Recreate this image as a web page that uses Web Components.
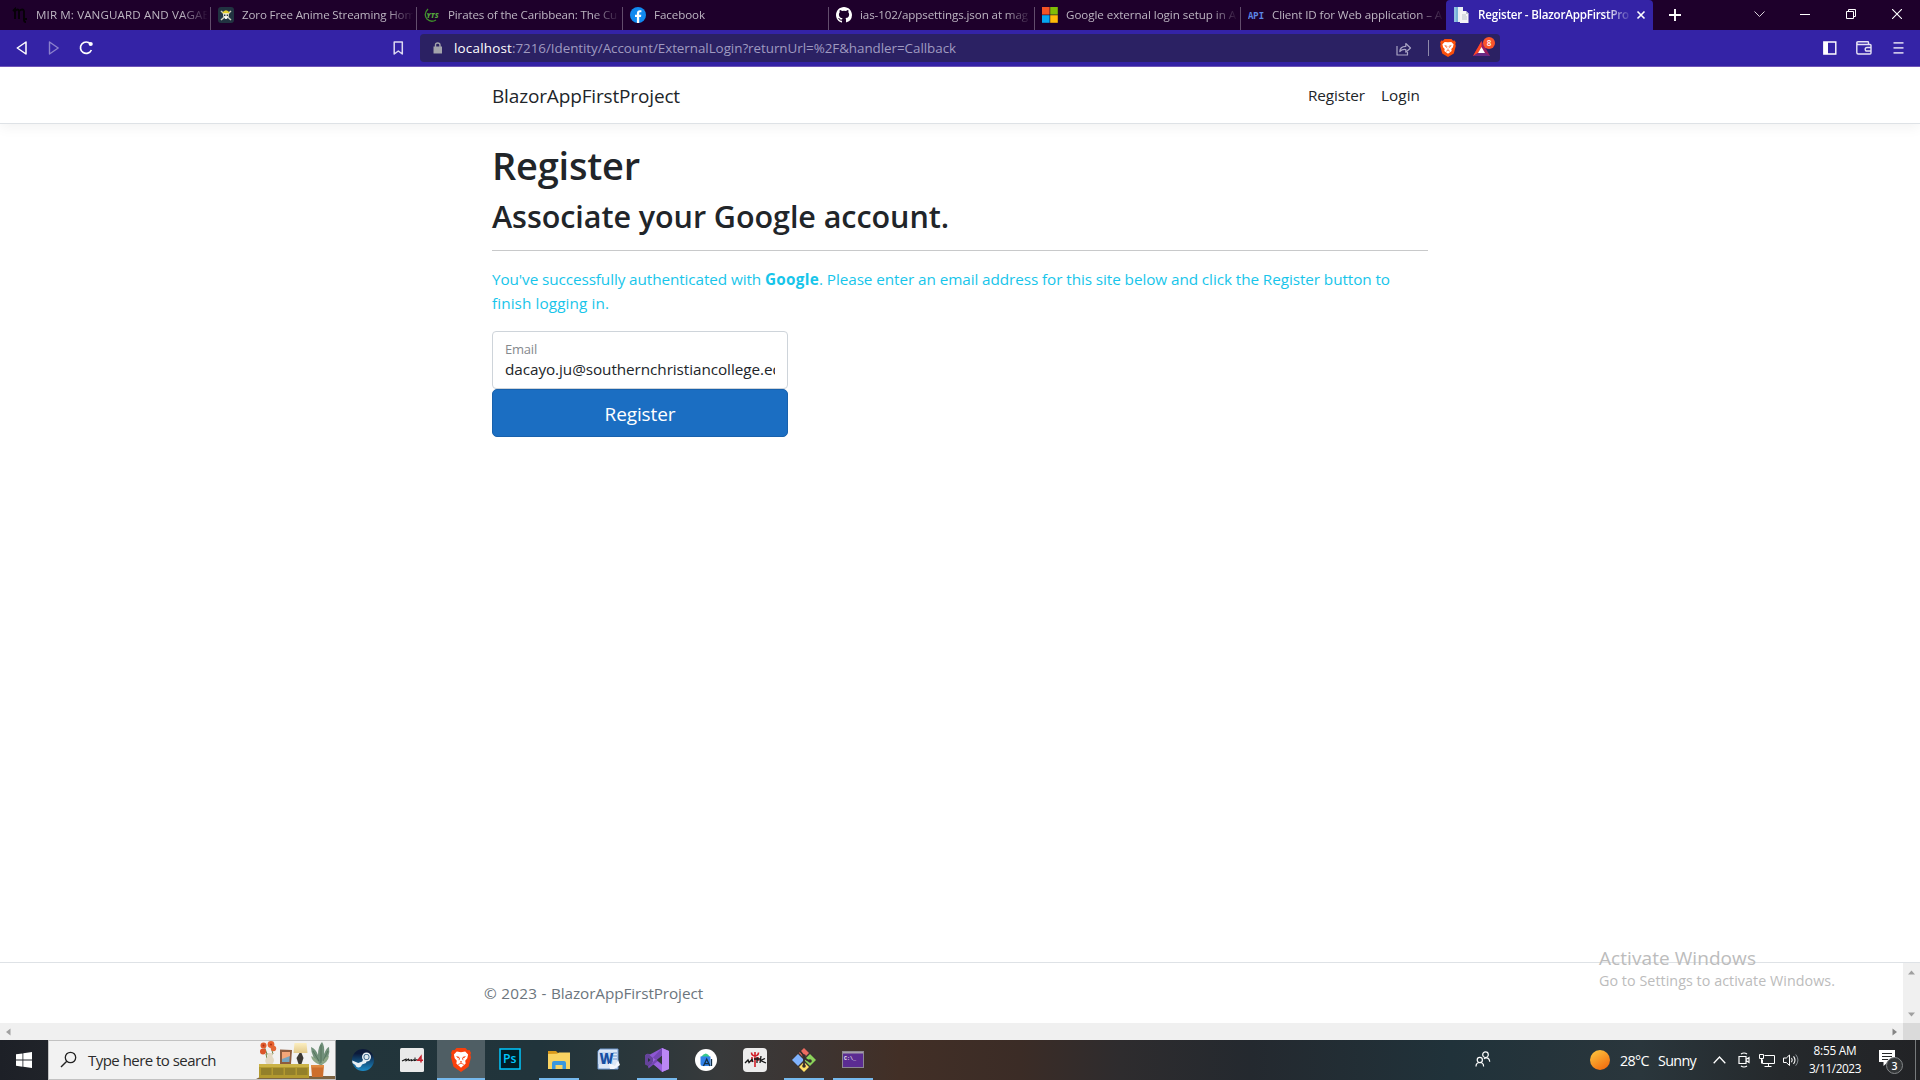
<!DOCTYPE html>
<html lang="en">
<head>
<meta charset="utf-8">
<title>Register - BlazorAppFirstProject</title>
<style>
html,body{margin:0;height:1080px;overflow:hidden;background:#fff}
body{font-family:"Open Sans","Noto Sans",sans-serif}
</style>
</head>
<body>
<desktop-screen></desktop-screen>
<script>
const define=(tag,html)=>customElements.define(tag,class extends HTMLElement{
  constructor(){super();this.attachShadow({mode:"open"}).innerHTML=html}
});

const ICONS={
mir:[16,16,`<path d="M1 4l2-2v10M3 4q3-3 4 0v8M7 4q4-3 5 0v9q0 2 2 2M11 12h4" fill="none" stroke="#060206" stroke-width="1.8"/>`],
zoro:[16,16,`<rect width="16" height="16" rx="3" fill="#213341"/><path d="M3 4l10 9M13 4L3 13" stroke="#cfd0c2" stroke-width="1.500"/><circle cx="8" cy="8" r="2.900" fill="#f1efe2"/><path d="M4 6.200q4-6 8 0z" fill="#e5cf2c"/><path d="M6 8.200h1.400M8.700 8.200h1.400" stroke="#213341" stroke-width="1.400"/><path d="M6.800 11h2.400" stroke="#fff" stroke-width="1.800"/>`],
yts:[16,16,`<path d="M4 2Q-1 7 3 12q4 4 9 1" fill="none" stroke="#3f8f2b" stroke-width="1.300"/><text x="2.500" y="10.500" font-size="7" font-weight="800" font-style="italic" fill="#54a43b" textLength="12" font-family="Open Sans">YTS</text>`],
fb:[16,16,`<circle cx="8" cy="8" r="8" fill="#1189ef"/><path d="M6.900 16V10H5V7.700h1.900V6.200c0-2 1.200-3 3-3l1.500.1v2h-1c-1 0-1.200.5-1.200 1.200v1.200h2.100L11 10H9.200v6z" fill="#fff"/>`],
gh:[16,16,`<path fill="#fff" d="M8 0C3.580 0 0 3.580 0 8c0 3.540 2.290 6.530 5.470 7.590.4.070.55-.17.55-.38v-1.500c-2 .37-2.530-.9-2.700-1.200-.1-.2-.5-.900-.820-1.080-.280-.15-.68-.520 0-.53.630-.01 1.080.580 1.230.820.720 1.210 1.870.870 2.330.660.070-.520.280-.870.510-1.070-1.780-.2-3.640-.89-3.640-3.950 0-.87.310-1.590.820-2.150-.080-.2-.360-1.020.080-2.120 0 0 .67-.21 2.200.820a7.600 7.600 0 014 0c1.530-1.040 2.200-.820 2.200-.820.440 1.100.160 1.920.080 2.120.510.560.820 1.270.820 2.150 0 3.070-1.870 3.750-3.650 3.950.290.250.540.730.540 1.480v2.200c0 .21.150.46.550.380A8 8 0 0016 8c0-4.420-3.580-8-8-8z"/>`],
ms:[16,16,`<path fill="#f35325" d="M0 0h7.600v7.600H0z"/><path fill="#81bc06" d="M8.200 0h7.600v7.600H8.200z"/><path fill="#05a6f0" d="M0 8.200h7.600v7.600H0z"/><path fill="#ffba08" d="M8.200 8.200h7.600v7.600H8.200z"/>`],
api:[16,16,`<text x="0" y="12" font-size="10.500" font-weight="700" fill="#5b86e5" textLength="16" lengthAdjust="spacingAndGlyphs" font-family="Liberation Mono">API</text>`],
doc:[16,16,`<path d="M1 0h9v15H1z" fill="#e8eef3"/><path d="M1 0h4v15H1z" fill="#76b1d6"/><path d="M1.500 0h1v15h-1z" fill="#a7d1ea"/><path d="M7 4h6l2.500 2.500V16H7z" fill="#f4f5f6"/><path d="M9 8h4M9 10h5M9 12h5" stroke="#bcc5cb"/><path d="M13 4v3h2.500" fill="#b9c2c8"/>`],
close:[10,10,`<path d="M1.500 1.500l7 7m0-7l-7 7" stroke="#fff" stroke-width="1.600"/>`],
plus:[12,12,`<path d="M6 0v12M0 6h12" stroke="#fff" stroke-width="1.900"/>`],
chev:[11,8,`<path d="M.5 1.500l5 5 5-5" fill="none" stroke="#d8d2db"/>`],
min:[10,10,`<path d="M0 4.500h10" stroke="#fff"/>`],
restore:[10,10,`<path d="M.5 2.500h7v7h-7zM2.500 2.500v-2h7v7h-2" fill="none" stroke="#fff"/>`],
wclose:[10,10,`<path d="M0 0l10 10m0-10L0 10" stroke="#fff" stroke-width="1.100"/>`],
back:[12,14,`<path d="M10 1v12L1.300 7z" fill="none" stroke="#fff" stroke-width="1.500" stroke-linejoin="round"/>`],
fwd:[12,14,`<path d="M1.500 1v12L10.200 7z" fill="none" stroke="#8b80cd" stroke-width="1.400" stroke-linejoin="round"/>`],
reload:[15,14,`<path d="M11.500 3A5.700 5.700 0 1012.400 9" fill="none" stroke="#fff" stroke-width="1.700"/><circle cx="11.700" cy="3" r="2.100" fill="#fff"/>`],
mark:[11,14,`<path d="M1.200 1h8.100v12L5.300 10l-4.100 3z" fill="none" stroke="#ddd9f1" stroke-width="1.500" stroke-linejoin="round"/>`],
lock:[10,12,`<path d="M.5 4.500h8.500v7H.5z" fill="#a3a3ab"/><path d="M2.500 5V3q0-2 2.200-2T7 3v2" fill="none" stroke="#a3a3ab" stroke-width="1.400"/>`],
share:[16,15,`<path d="M1 5v9h10.500v-3M3.800 10.500q.2-5 6-5.200V2.500L14.500 7l-4.700 4.200V8.500q-4-.3-6 2z" fill="none" stroke="#a9a4c4" stroke-width="1.200" stroke-linejoin="round"/>`],
lion:[16,18,`<path d="M4.500 0h7l1.500 1.700 1.700-.1 1.100 2-.5 1.400.5 2-2 7.500L8 18l-5.800-3.500L.2 7l.5-2-.5-1.400 1.100-2 1.700.1z" fill="#fb4f0b"/><path d="M8 3.300l3.300-.4 2.300 2.300-.7 3-1.600 1.700.4 2.100L8 14.800l-3.700-2.800.4-2.100-1.600-1.700-.7-3 2.300-2.300z" fill="#fff"/><path d="M4.200 6.200l2.700.6-1 1.200zM11.800 6.200l-2.700.6 1 1.200zM7.300 9.700h1.400L8 10.900z" fill="#fb4f0b"/><path d="M8 10.700v.8M6 12.300l2-.9 2 .9M7 7.200L6.500 9M9 7.200L9.500 9" stroke="#fb4f0b" stroke-width=".6" fill="none"/>`],
bat:[19,17,`<path d="M8.500 1L0 16h17z" fill="#9b1f5f"/><path d="M8.500 1L0 16l5-3 3.500-6z" fill="#ff4724"/><path d="M0 16h17l-5-3H5z" fill="#672a86"/><path d="M8.500 7L5 13h7z" fill="#fff"/>`],
side:[14,14,`<path d="M.8 1h12v12H.8z" fill="none" stroke="#fff" stroke-width="1.400"/><path d="M1 1h4v12H1z" fill="#fff"/>`],
wallet:[16,14,`<path d="M12.500 3.500V1.500q0-.7-.8-.7H2Q.8.8.8 2v9.500q0 1.500 1.400 1.500H14q1 0 1-1V4.500q0-1-1-1H2.500Q.8 3.500.8 2" fill="none" stroke="#e6e3f5" stroke-width="1.400"/><path d="M15 6.500h-4q-1.800 0-1.800 1.800T11 10h4" fill="none" stroke="#e6e3f5" stroke-width="1.400"/>`],
menu:[11,14,`<path d="M.5 1.800h10M.5 6.800h10M.5 11.800h10" stroke="#c8c2e8" stroke-width="1.800"/>`],
win:[16,16,`<path fill="#fff" d="M0 2.300L6.500 1.400v6.200H0zM7.300 1.300L16 0v7.600H7.300zM0 8.400h6.500v6.300L0 13.700zM7.300 8.400H16V16l-8.700-1.200z"/>`],
search:[18,18,`<circle cx="10.500" cy="6.500" r="5.200" fill="none" stroke="#222" stroke-width="1.300"/><path d="M6.800 10.200L1 16" stroke="#222" stroke-width="1.400"/>`],
room:[79,38,`<defs><linearGradient id="g" x2="0" y2="1"><stop stop-color="#fbeec0" offset="0"/><stop stop-color="#e2c98a" offset="1"/></linearGradient></defs><path d="M0 38l6-3h73v3z" fill="#7d6442"/><rect x="3" y="23" width="50" height="14" fill="#b39a2e"/><path d="M3 23h50v3H3z" fill="#cbb347"/><path d="M5 27h10.500v7H5zM17 27h10.500v7H17zM29 27h10.500v7H29zM41 27h10.500v7H41z" fill="#93802a"/><path d="M12 22l-2-9h7l-2-7M11 13L8 5" stroke="#718245" fill="none"/><path d="M11.500 12h5v4q3 3 0 7h-6q-3-4 1-7z" fill="#e3d9c4"/><circle cx="7.500" cy="4.500" r="3" fill="#e05b2c"/><circle cx="15" cy="3.500" r="3.400" fill="#e8632f"/><circle cx="7" cy="10.500" r="3" fill="#dc552a"/><circle cx="17.500" cy="7.500" r="2.700" fill="#e46634"/><circle cx="7.500" cy="4.500" r="1" fill="#a93219"/><circle cx="15" cy="3.500" r="1" fill="#a93219"/><path d="M24 8.500l12 .5-1 14H24z" fill="#8d5c3e"/><path d="M26 11h8l-.6 10H26z" fill="#77a5c0"/><path d="M26 11h8v4l-8 3z" fill="#f2a779"/><path d="M38.500 2h12l1 10H37.500z" fill="url(#g)"/><path d="M43.500 12h2l2 5-2 6h-3l-2-6z" fill="#3b3833"/><path d="M64 24q-9-8-9-18 5 2 7 8 0-9 4-13 3 4 2 12 3-7 5-7 2 10-7 18z" fill="#71907a"/><path d="M64 24q-8-3-9-9 6 2 9 9 2-7 9-9-1 7-9 9z" fill="#8da787"/><path d="M65 22V4M63 20l-6-10M67 20l5-10" stroke="#4b6c52" stroke-width=".7"/><path d="M55 24h13l-1 12H56z" fill="#cd6f2d"/><path d="M55 24h13v2.500H55z" fill="#df8b43"/>`],
steam:[22,22,`<defs><linearGradient id="s" x2="0" y2="1"><stop stop-color="#0c1a3a" offset=".2"/><stop stop-color="#1c8cc8" offset="1"/></linearGradient></defs><circle cx="11" cy="11" r="11" fill="url(#s)"/><path d="M.2 11.500l6 2.500 4-1.500L12 8.500l3 2.500-1 3-4 1.500q-1 3.200-4 3-2-.5-2.700-2.600L.5 14z" fill="#e9f0f5"/><circle cx="14.500" cy="8" r="4.500" fill="#e9f0f5"/><circle cx="14.500" cy="8" r="3" fill="#2d5c85"/><circle cx="14.500" cy="8" r="2.200" fill="#dfe9f0"/>`],
muk:[24,24,`<rect width="24" height="24" rx="1.500" fill="#eaeaea"/><path d="M2 13l4-1.800v1.600l2.500-1.600.5 1.300 2.500-.8v1l2.500-1 .5.900 3-1" fill="none" stroke="#161616" stroke-width="1.100"/><path d="M15 9.500v3.500" stroke="#161616"/><path d="M21 14.500V8.500L18 12.300h5" fill="none" stroke="#c8202d" stroke-width="1.500"/>`],
brave:[20,24,`<path d="M5.500 0h9L16.500 2.200l2-.1L20 5l-.6 1.700.6 2.800-2.500 9.200L10 24l-7.500-5.300L0 9.500l.6-2.800L0 5l1.500-2.900 2 .1z" fill="#f9400c"/><path d="M10 4.300l4.200-.8 2.900 3-.8 3.800-2.100 2.500.5 2.800L10 19.800l-4.700-4.200.5-2.800-2.100-2.500-.8-3.800 2.900-3z" fill="#fff"/><path d="M5 8l3.500.9-1.300 1.500zM15 8l-3.500.9 1.300 1.500zM9 13h2l-1 1.500z" fill="#f9400c"/><path d="M10 14v1.200M7.200 16.500l2.800-1.300 2.800 1.300M8.700 9.700L8 12.200M11.300 9.700L12 12.200" stroke="#f9400c" stroke-width=".8" fill="none"/>`],
ps:[22,22,`<rect x="1" y="1" width="20" height="20" fill="#001d26" stroke="#00c8ff" stroke-width="1.500"/><text x="4" y="15" font-size="12" font-weight="600" fill="#00c8ff" textLength="13.500" lengthAdjust="spacingAndGlyphs" font-family="Open Sans">Ps</text>`],
folder:[22,18,`<path d="M0 0h8l2 2h12v16H0z" fill="#d99a1c"/><path d="M0 3l9-.2 2-1.300h11V18H0z" fill="#f9d362"/><path d="M4 18v-6q0-2 2-2h10q2 0 2 2v6h-3.500v-4h-7v4z" fill="#3b97de"/>`],
word:[23,22,`<path d="M3 1h18v20H1V3z" fill="#dce8f7" stroke="#6d96cf"/><path d="M14 5h6M14 8h6M14 11h6" stroke="#6c93cc"/><path d="M1 4h15v12H1z" fill="#c5d9f3"/><text x="2.500" y="16" font-size="16" font-weight="800" fill="#174fa3" textLength="14" lengthAdjust="spacingAndGlyphs" font-family="Open Sans">W</text><path d="M12 15l6 3 3-6 2 5-6 4h-4z" fill="#f5f8fd"/>`],
vs:[24,24,`<path d="M17 0l7 3v18l-7 3L3.500 10.500 1 8.500 0 9l2-3 3 .5z" fill="#8d57d3"/><path d="M0 7.500L2.500 6 5 7l13 11v6L4 13l-2 1.500V10z" fill="#9a62dd"/><path d="M0 7l3-1.500L8 10v4l-5 4L0 16.500z" fill="#65439b"/><path d="M3 10l2.500 2L3 14z" fill="#26343a"/><path d="M17 0l7 3v18l-7 3z" fill="#bb87f5"/><path d="M17 0L8 9.500l3 2.500 6-5zM3 18l5-4 3-3 2 2-9.500 7.500z" fill="#7547b5"/><path d="M17 7.500v9L11.500 12z" fill="#30363a"/>`],
studio:[22,22,`<circle cx="11" cy="11" r="11" fill="#fff"/><path d="M6 8q5-7 9 0v2H6z" fill="#35c98a"/><path d="M5.500 7.500h10v9.500H7.500q-2 0-2-2z" fill="#3181e8"/><path d="M8.500 17l3.200-7 3.200 7M10 14.700h4M16.500 10v7" stroke="#123047" fill="none" stroke-width="1.300"/>`],
mtk:[24,24,`<rect width="24" height="24" rx="4" fill="#ececec"/><path d="M8.500 4.500q0 3 3.500 3.500M12 4v15M15.500 4.500q0 3-3.500 3.500M9 9v5M15 9v4" stroke="#d21e29" fill="none" stroke-width="1.600"/><path d="M2 15l3-3 1 2.500 3-3 1 2.500M11 11h6M14 9v6M18 8l-1 7M22 10.500l-4.500 2 5.500 2.500" stroke="#161616" fill="none" stroke-width="1.300"/>`],
git:[24,24,`<path d="M12 0l5 5-5 5-5-5z" fill="#ee6c60"/><path d="M6 6l6 6-6 6-6-6z" fill="#80b3ff"/><path d="M18 6l6 6-6 6-6-6z" fill="#8cd45b"/><path d="M12 14l5 5-5 5-5-5z" fill="#ffe067"/><path d="M8 3l4 5v10M12 8q1 4 6 5" fill="none" stroke="#352e2d" stroke-width="1.800"/><circle cx="12" cy="8" r="1.800" fill="#352e2d"/><circle cx="12" cy="18" r="1.800" fill="#352e2d"/><circle cx="18" cy="13" r="1.800" fill="#352e2d"/>`],
cmd:[22,17,`<rect x=".5" y=".5" width="21" height="16" fill="#5b2c92" stroke="#8c8793"/><path d="M1 1h20v1.500H1z" fill="#a49faa"/><text x="2" y="8.500" font-size="5" font-weight="700" fill="#eee" font-family="Liberation Mono">C:\\_</text>`],
people:[16,16,`<g fill="none" stroke="#fff" stroke-width="1.200"><circle cx="10.500" cy="3.700" r="2.800"/><circle cx="4.800" cy="9" r="2.600"/><path d="M1 15.500q0-4 3.800-4t3.800 4M9 8q1-1.300 2.500-1.200 3 .2 3.200 4"/></g>`],
sun:[20,20,`<defs><linearGradient id="u" x1=".2" x2=".8" y2="1"><stop stop-color="#fdc33d" offset="0"/><stop stop-color="#f2690d" offset="1"/></linearGradient></defs><circle cx="10" cy="10" r="10" fill="url(#u)"/>`],
up:[13,8,`<path d="M.7 7.200L6.500 1l5.800 6.200" fill="none" stroke="#fff" stroke-width="1.300"/>`],
cam:[13,16,`<path d="M1 4.500h7v7H1zM8 7.500l3-2v5l-3-2M3 2q3-2 6 0M3 14q3 2 6 0" fill="none" stroke="#fff" stroke-width="1.200"/>`],
net:[17,15,`<path d="M5.500 2.500h10v8H3.500v-4M9.500 10.500v3M5.500 13.500h7" fill="none" stroke="#fff"/><path d="M.5 1.500h4v4h-4zM2.500 5.500v5" fill="none" stroke="#fff"/>`],
vol:[17,14,`<path d="M.5 5h2.800L6.500 2v10.500l-3.200-3H.5z" fill="none" stroke="#fff"/><path d="M8.500 5q1.500 2 0 4.300M10.500 3.300q3 3.700 0 7.600" fill="none" stroke="#fff" stroke-width="1.100"/><path d="M12.700 1.500q4.500 5.500 0 11.200" fill="none" stroke="#899095"/>`],
note:[17,16,`<path d="M0 0h16v12H9l-4.500 4v-4H0z" fill="#fff"/><path d="M3 3.500h10M3 6.500h10M3 9.500h6" stroke="#262829"/>`],
tup:[7,5,`<path d="M0 4.500L3.500.5 7 4.500z" fill="#a0a0a0"/>`],
tdown:[7,5,`<path d="M0 .5h7L3.500 4.500z" fill="#a0a0a0"/>`],
tleft:[5,8,`<path d="M4.500.5v7L0 4z" fill="#a0a0a0"/>`],
tright:[5,8,`<path d="M.5.5v7L5 4z" fill="#858585"/>`]
};
customElements.define("ui-icon",class extends HTMLElement{
  constructor(){super();this.attachShadow({mode:"open"})}
  connectedCallback(){
    const [w,h,body]=ICONS[this.getAttribute("name")];
    this.shadowRoot.innerHTML=`<style>:host{display:block;flex:none;width:${w}px;height:${h}px}svg{display:block}</style><svg width="${w}" height="${h}" viewBox="0 0 ${w} ${h}">${body}</svg>`;
  }
});

define("browser-tab",`<style>
:host{display:flex;box-sizing:border-box;flex:none;width:206px;height:30px;align-items:center;padding-left:8px;color:#bdb5c2}
.cut{width:171px;margin-left:8px;margin-bottom:2px;overflow:hidden;-webkit-mask-image:linear-gradient(90deg,#000 145px,transparent 172px)}
.sep{width:1px;height:23px;align-self:flex-end;margin-left:auto;margin-right:-1px;background:#624d6c}
:host([active]){width:207px;background:#3423a6;border-radius:4px 4px 0 0;color:#fff}
:host([active]) .cut{width:152px;-webkit-mask-image:linear-gradient(90deg,#000 128px,transparent 154px)}
:host([active]) .sep,:host([last]) .sep{visibility:hidden}
::slotted([slot=close]){margin-left:6px}
</style><slot name="icon"></slot><div class="cut"><slot></slot></div><slot name="close"></slot><div class="sep"></div>`);

define("tab-strip",`<style>
:host{display:flex;height:30px;background:#1e002b;align-items:center;padding-left:4px}
ui-icon{margin-bottom:1px}
</style>
<browser-tab><ui-icon slot="icon" name="mir"></ui-icon><fit-text s="11.6" w="174">MIR M: VANGUARD AND VAGAB</fit-text></browser-tab>
<browser-tab><ui-icon slot="icon" name="zoro"></ui-icon><fit-text s="11.6" w="173">Zoro Free Anime Streaming Hom</fit-text></browser-tab>
<browser-tab><ui-icon slot="icon" name="yts"></ui-icon><fit-text s="11.6" w="169">Pirates of the Caribbean: The Cu</fit-text></browser-tab>
<browser-tab><ui-icon slot="icon" name="fb"></ui-icon><fit-text s="11.6" w="51">Facebook</fit-text></browser-tab>
<browser-tab><ui-icon slot="icon" name="gh"></ui-icon><fit-text s="11.6" w="168">ias-102/appsettings.json at mag</fit-text></browser-tab>
<browser-tab><ui-icon slot="icon" name="ms"></ui-icon><fit-text s="11.6" w="170">Google external login setup in A</fit-text></browser-tab>
<browser-tab last><ui-icon slot="icon" name="api"></ui-icon><fit-text s="11.6" w="170">Client ID for Web application – A</fit-text></browser-tab>
<browser-tab active><ui-icon slot="icon" name="doc" style="margin-left:-1px;margin-right:1px"></ui-icon><fit-text s="11.6" w="151" weight="600">Register - BlazorAppFirstPro</fit-text><ui-icon slot="close" name="close"></ui-icon></browser-tab>
<ui-icon name="plus" style="margin-left:16px"></ui-icon>
<ui-icon name="chev" style="margin-left:73px;margin-bottom:3px"></ui-icon>
<ui-icon name="min" style="margin-left:35px"></ui-icon>
<ui-icon name="restore" style="margin-left:36px;margin-bottom:2px"></ui-icon>
<ui-icon name="wclose" style="margin-left:36px;margin-bottom:2px"></ui-icon>`);

define("address-bar",`<style>
:host{display:flex;box-sizing:border-box;width:1080px;height:28px;background:#2b2163;border-radius:4px;align-items:center;padding-left:13px;color:#9f9ac0}
.host{color:#fff}
.share{margin-left:auto}.line{width:1px;height:16px;background:#8f8aab;margin:0 11px 0 16px}
.bat{position:relative;margin:0 8px 0 17px}
.badge{position:absolute;left:10px;top:-3px;width:12px;height:12px;border-radius:6px;background:#fb542b;color:#fff;display:flex;justify-content:center;align-items:center}
</style><ui-icon name="lock"></ui-icon>
<fit-text class="host" s="13.4" w="58" style="margin-left:11px">localhost</fit-text><fit-text s="13.4" w="444">:7216/Identity/Account/ExternalLogin?returnUrl=%2F&amp;handler=Callback</fit-text>
<ui-icon class="share" name="share"></ui-icon><div class="line"></div><ui-icon name="lion"></ui-icon>
<div class="bat"><ui-icon name="bat"></ui-icon><div class="badge"><fit-text s="8" w="4.500" weight="600">8</fit-text></div></div>`);

define("browser-toolbar",`<style>
:host{display:flex;box-sizing:border-box;height:37px;background:#3423a6;border-bottom:1px solid #7055ba;align-items:center;padding-left:16px}
</style><ui-icon name="back"></ui-icon><ui-icon name="fwd" style="margin-left:20px"></ui-icon><ui-icon name="reload" style="margin-left:19px"></ui-icon>
<ui-icon name="mark" style="margin-left:299px"></ui-icon><address-bar style="margin-left:16px"></address-bar>
<ui-icon name="side" style="margin-left:323px"></ui-icon><ui-icon name="wallet" style="margin-left:19px"></ui-icon><ui-icon name="menu" style="margin-left:21px"></ui-icon>`);

define("site-nav",`<style>
:host{display:flex;height:56px;border-bottom:1px solid #dee2e6;box-shadow:0 4px 12px rgba(0,0,0,.05);color:#212529}
.in{display:flex;width:936px;margin:0 auto;padding-right:8px;align-items:center;box-sizing:border-box}
.links{display:flex;margin-left:auto;gap:16px}
</style><div class="in"><fit-text s="19" w="188" style="margin-top:1px">BlazorAppFirstProject</fit-text>
<div class="links"><fit-text s="15.300" w="57">Register</fit-text><fit-text s="15.300" w="39">Login</fit-text></div></div>`);

define("email-field",`<style>
:host{display:flex;flex-direction:column;box-sizing:border-box;width:296px;height:58px;border:1px solid #ced4da;border-radius:4px;padding:7px 12px 0;color:#212529}
.label{color:#85898d;height:20px;display:flex;align-items:center}.value{height:20px;overflow:hidden;display:flex;align-items:center}
</style><div class="label"><slot name="label"></slot></div><div class="value"><slot></slot></div>`);

define("primary-button",`<style>
:host{display:flex;box-sizing:border-box;width:296px;height:48px;border:1px solid #1861ac;border-radius:5px;background:#1b6ec2;color:#fff;align-items:center;justify-content:center;padding-top:1px}
</style><slot></slot>`);

define("register-page",`<style>
:host{display:flex;flex-direction:column;box-sizing:border-box;width:936px;margin:0 auto;color:#212529;flex:1;padding-top:17px}
h1,h2,p{margin:0;font-weight:inherit;display:flex;align-items:center}
h1{height:48px}h2{height:38px;margin-top:8px}
hr{width:100%;height:1px;border:0;margin:15px 0 16px;background:#c8c9ca}
p{height:24px;color:#17c5ea}
p.last{margin-bottom:16px}
</style><h1><fit-text s="38" w="148" weight="600">Register</fit-text></h1>
<h2><fit-text s="30.500" w="457" weight="600">Associate your Google account.</fit-text></h2><hr>
<p><fit-text s="15.300" w="273">You've successfully authenticated with&nbsp;</fit-text><fit-text s="15.300" w="54" weight="700">Google</fit-text><fit-text s="15.300" w="571">. Please enter an email address for this site below and click the Register button to</fit-text></p>
<p class="last"><fit-text s="15.300" w="117">finish logging in.</fit-text></p>
<email-field><fit-text slot="label" s="13" w="32">Email</fit-text><fit-text s="15.300" w="286">dacayo.ju@southernchristiancollege.edu</fit-text></email-field>
<primary-button><fit-text s="19" w="71">Register</fit-text></primary-button>`);

define("site-footer",`<style>
:host{display:flex;flex-direction:column;height:77px;border-top:1px solid #dee2e6}
.row{display:flex;height:60px}.text{flex:1;display:flex;align-items:center;padding-left:484px;padding-bottom:1px;box-sizing:border-box;height:60px;color:#6c757d}
.v{width:17px;background:#f0f0f0;display:flex;flex-direction:column;justify-content:space-between;align-items:center;padding:7px 0 6px;box-sizing:border-box}
.h{height:17px;background:#f0f0f0;display:flex;align-items:center;padding-left:6px}
.h .r{margin-left:auto;margin-right:6px}.corner{width:17px;height:17px;background:#dadada}
</style><div class="row"><div class="text"><fit-text s="15.300" w="67">© 2023 -&nbsp;</fit-text><fit-text s="15.300" w="152">BlazorAppFirstProject</fit-text></div>
<div class="v"><ui-icon name="tup"></ui-icon><ui-icon name="tdown"></ui-icon></div></div>
<div class="h"><ui-icon name="tleft"></ui-icon><ui-icon class="r" name="tright"></ui-icon><div class="corner"></div></div>`);

define("task-app",`<style>
:host{display:flex;position:relative;flex:none;width:48px;height:40px;align-items:center;justify-content:center}
:host([active]){background:#4f5e64}
.line{position:absolute;bottom:0;left:4px;right:4px;height:2px;background:#76b9ed;display:none}
:host([open]) .line,:host([active]) .line{display:block}:host([active]) .line{left:0;right:0}
</style><slot></slot><div class="line"></div>`);

define("system-tray",`<style>
:host{display:flex;height:40px;margin-left:auto;align-items:center;color:#fff}
.clock{display:flex;flex-direction:column;width:54px;margin-left:8px;align-items:center;margin-bottom:2px}
.note{position:relative;margin:0 19px 4px 17px}
.count{position:absolute;left:7px;top:7px;box-sizing:border-box;width:17px;height:17px;border-radius:50%;border:1px solid #85888a;background:#333638;display:flex;align-items:center;justify-content:center}
.end{width:1px;height:40px;background:#777a7c;margin-right:4px}
</style><ui-icon name="people" style="margin-bottom:2px"></ui-icon><ui-icon name="sun" style="margin-left:99px"></ui-icon>
<fit-text s="14.300" w="29" style="margin-left:10px">28°C</fit-text><fit-text s="14.300" w="38" style="margin-left:9px">Sunny</fit-text>
<ui-icon name="up" style="margin-left:17px"></ui-icon><ui-icon name="cam" style="margin-left:12px"></ui-icon><ui-icon name="net" style="margin-left:8px"></ui-icon><ui-icon name="vol" style="margin-left:7px"></ui-icon>
<div class="clock"><fit-text s="11.800" w="43" lh="18">8:55 AM</fit-text><fit-text s="11.800" w="52" lh="18">3/11/2023</fit-text></div>
<div class="note"><ui-icon name="note"></ui-icon><div class="count"><fit-text s="10.500" w="6" weight="600">3</fit-text></div></div><div class="end"></div>`);

define("task-bar",`<style>
:host{display:flex;height:40px;align-items:center;background:linear-gradient(90deg,#1d2027 0,#202329 48px,#22353b 336px,#21343b 540px,#2b373b 640px,#383a3b 720px,#3c3533 800px,#422f26 900px,#3b2c26 1020px,#2e2c2e 1120px,#24292f 1250px,#20323a 1450px,#2a363c 1640px,#25292c 1780px,#222326 1920px)}
.start{width:48px;display:flex;justify-content:center}
.search{display:flex;align-items:center;box-sizing:border-box;width:288px;height:40px;background:#f2f2f2;border:1px solid #c2c2c2;border-right-color:#999;padding-left:11px;color:#2b2b2b}
.apps{display:flex;gap:1px;margin-left:3px}
</style><div class="start"><ui-icon name="win"></ui-icon></div>
<div class="search"><ui-icon name="search"></ui-icon><fit-text s="15" w="128" style="margin-left:10px;margin-bottom:1px">Type here to search</fit-text><ui-icon name="room" style="margin-left:auto"></ui-icon></div>
<div class="apps"><task-app><ui-icon name="steam"></ui-icon></task-app><task-app><ui-icon name="muk"></ui-icon></task-app><task-app active><ui-icon name="brave"></ui-icon></task-app><task-app><ui-icon name="ps" style="margin-bottom:2px"></ui-icon></task-app><task-app open><ui-icon name="folder"></ui-icon></task-app><task-app><ui-icon name="word" style="margin-bottom:2px"></ui-icon></task-app><task-app open><ui-icon name="vs"></ui-icon></task-app><task-app><ui-icon name="studio"></ui-icon></task-app><task-app><ui-icon name="mtk"></ui-icon></task-app><task-app open><ui-icon name="git"></ui-icon></task-app><task-app open><ui-icon name="cmd" style="margin-bottom:1px"></ui-icon></task-app></div>
<system-tray></system-tray>`);

define("activation-notice",`<style>
:host{position:absolute;left:1599px;top:945px;display:flex;flex-direction:column;color:#bcbcbc}
</style><fit-text s="19" w="157" lh="26">Activate Windows</fit-text><fit-text s="14.300" w="236" lh="20">Go to Settings to activate Windows.</fit-text>`);

define("desktop-screen",`<style>
:host{display:flex;flex-direction:column;position:relative;width:1920px;height:1080px;overflow:hidden;background:#fff}
</style><tab-strip></tab-strip><browser-toolbar></browser-toolbar><site-nav></site-nav><register-page></register-page><site-footer></site-footer><task-bar></task-bar><activation-notice></activation-notice>`);

/* One line of text whose letter-spacing is tuned so that it is w pixels wide. */
customElements.define("fit-text",class extends HTMLElement{
  constructor(){super();this.attachShadow({mode:"open"})}
  connectedCallback(){
    const a=n=>this.getAttribute(n);
    this.shadowRoot.innerHTML=`<style>:host{display:block;flex:none;width:max-content;white-space:nowrap;font-size:${a("s")}px;font-weight:${a("weight")||400};${a("lh")?`line-height:${a("lh")}px`:""}}span{letter-spacing:0}</style><span><slot></slot></span>`;
    const span=this.shadowRoot.querySelector("span"),w=+a("w");
    const gap=(w-span.getBoundingClientRect().width)/this.textContent.length;
    span.style.letterSpacing=gap+"px";
  }
});
</script>
</body>
</html>
